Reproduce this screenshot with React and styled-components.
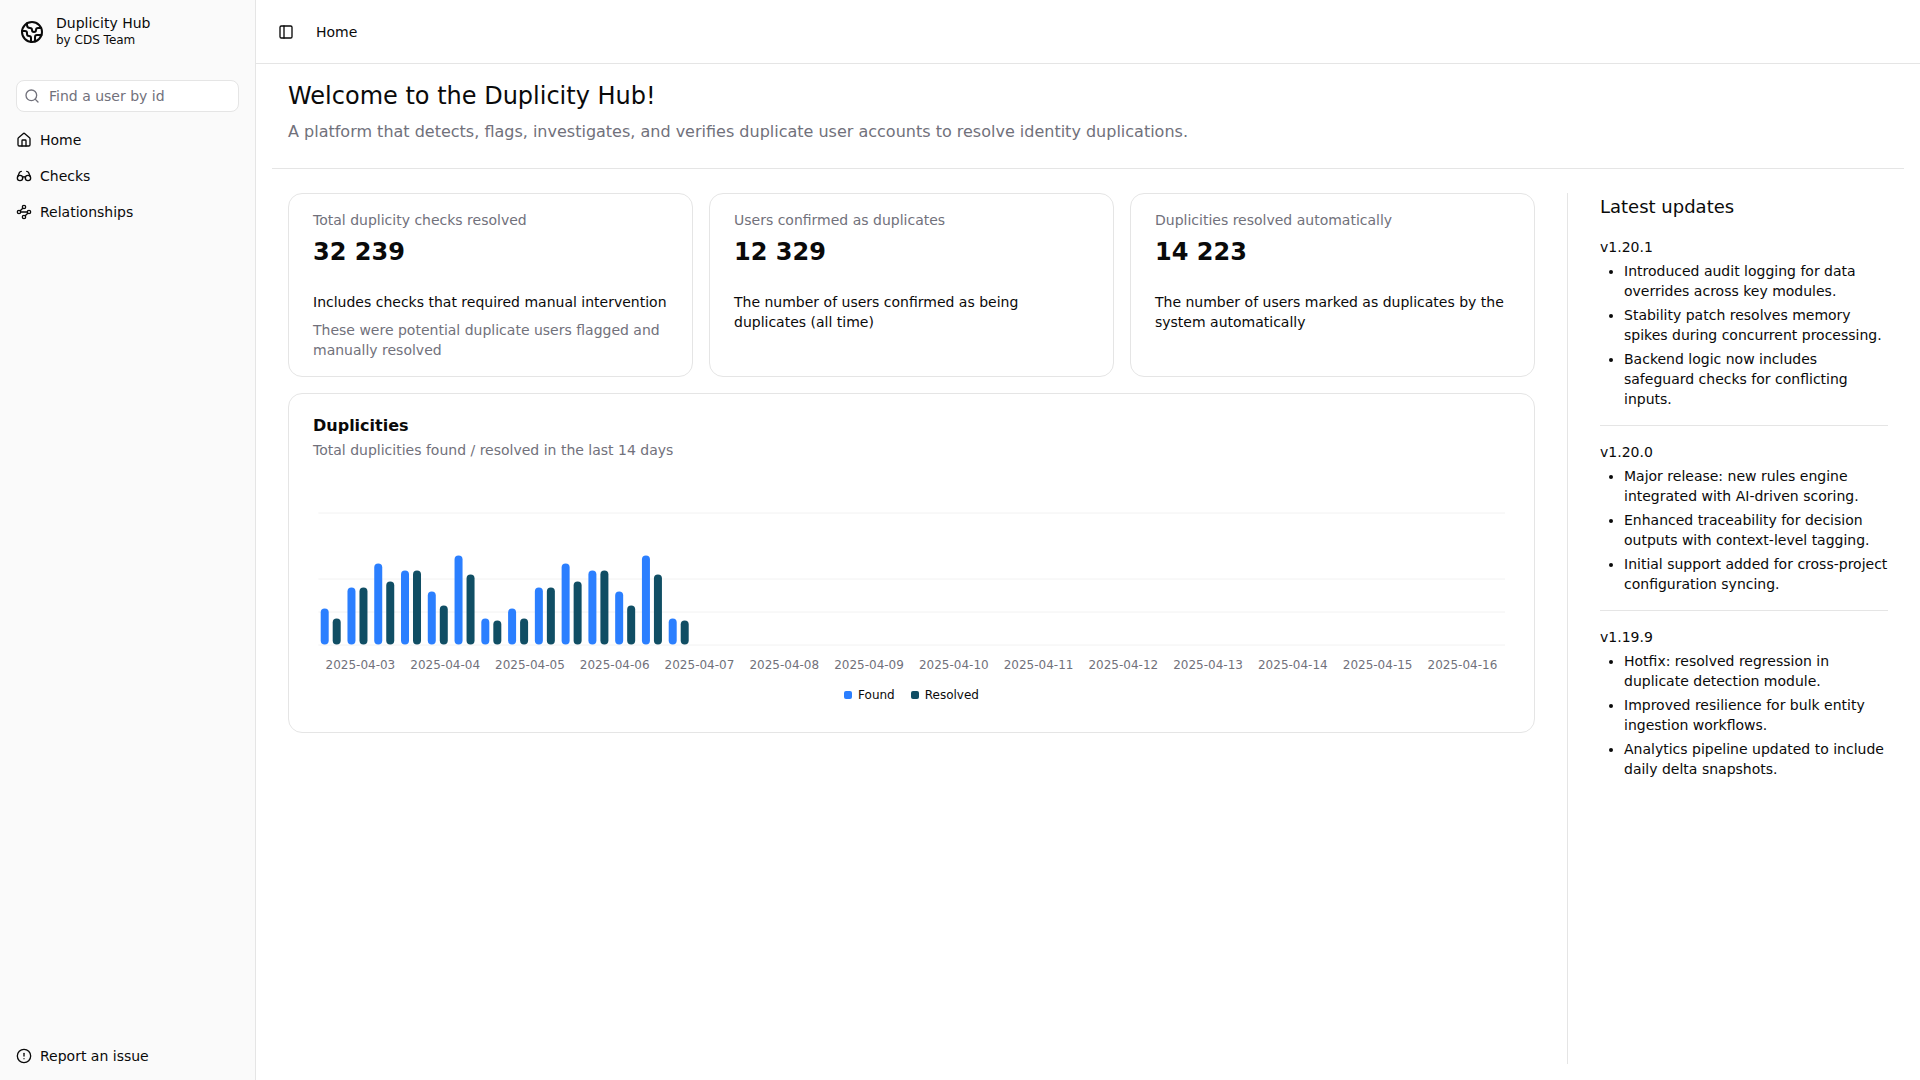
import styled, { createGlobalStyle } from "styled-components";
import {
  Earth,
  Search,
  House,
  Glasses,
  Waypoints,
  CircleAlert,
  PanelLeft,
} from "lucide-react";

const GlobalStyle = createGlobalStyle`
  * {
    box-sizing: border-box;
  }
  html, body {
    margin: 0;
    padding: 0;
    background: #fff;
    color: #0a0a0a;
    font-family: "DejaVu Sans", sans-serif;
  }
`;

const Page = styled.div`
  display: flex;
  height: 1080px;
  overflow: hidden;
`;

const Sidebar = styled.aside`
  width: 256px;
  flex-shrink: 0;
  display: flex;
  flex-direction: column;
  background: #fafafa;
  border-right: 1px solid #e5e5e5;
`;

const Brand = styled.div`
  display: flex;
  align-items: center;
  gap: 12px;
  padding: 15px 20px 0;
  height: 48px;
  svg {
    width: 24px;
    height: 24px;
    flex-shrink: 0;
  }
`;

const BrandName = styled.div`
  font-size: 14px;
  line-height: 17px;
`;

const BrandTeam = styled.div`
  font-size: 12px;
  line-height: 16px;
`;

const SearchBox = styled.label`
  display: flex;
  align-items: center;
  gap: 9px;
  height: 32px;
  margin: 32px 16px 0;
  padding: 0 8px 0 7px;
  background: #fff;
  border: 1px solid #e5e5e5;
  border-radius: 8px;
  color: #71717b;
  font-size: 14px;
  svg {
    width: 16px;
    height: 16px;
    flex-shrink: 0;
  }
`;

const Nav = styled.nav`
  display: flex;
  flex-direction: column;
  gap: 4px;
  padding: 12px 8px 0;
`;

const NavItem = styled.a`
  display: flex;
  align-items: center;
  gap: 8px;
  height: 32px;
  padding: 0 8px;
  font-size: 14px;
  color: #0a0a0a;
  svg {
    width: 16px;
    height: 16px;
    flex-shrink: 0;
  }
`;

const SidebarFoot = styled.div`
  margin-top: auto;
  padding: 0 8px 8px;
`;

const Main = styled.main`
  flex: 1;
  min-width: 0;
  display: flex;
  flex-direction: column;
`;

const TopBar = styled.header`
  display: flex;
  align-items: center;
  gap: 22px;
  height: 64px;
  padding: 0 22px;
  border-bottom: 1px solid #e5e5e5;
  font-size: 14px;
  svg {
    width: 16px;
    height: 16px;
  }
`;

const Body = styled.div`
  flex: 1;
  min-height: 0;
  display: flex;
  flex-direction: column;
  padding: 0 16px 16px;
`;

const Intro = styled.section`
  padding: 16px 16px 24px;
  border-bottom: 1px solid #e5e5e5;
`;

const Title = styled.h1`
  margin: 0 0 8px;
  font-size: 24px;
  line-height: 32px;
  font-weight: 400;
`;

const Subtitle = styled.p`
  margin: 0;
  font-size: 16px;
  line-height: 24px;
  color: #71717b;
`;

const Columns = styled.div`
  flex: 1;
  min-height: 0;
  display: flex;
  gap: 32px;
  padding: 24px 0 0 16px;
`;

const Left = styled.div`
  width: 1247px;
  flex-shrink: 0;
  display: flex;
  flex-direction: column;
  gap: 16px;
`;

const Stats = styled.div`
  display: grid;
  grid-template-columns: repeat(3, 1fr);
  gap: 16px;
`;

const Card = styled.div`
  background: #fff;
  border: 1px solid #e5e5e5;
  border-radius: 14px;
  padding: 16px 24px;
`;

const StatLabel = styled.div`
  font-size: 14px;
  line-height: 20px;
  color: #71717b;
`;

const StatValue = styled.div`
  margin-top: 6px;
  margin-bottom: 24px;
  font-size: 24px;
  line-height: 32px;
  font-weight: 700;
`;

const StatNote = styled.div`
  font-size: 14px;
  line-height: 20px;
`;

const StatMuted = styled.div`
  margin-top: 8px;
  font-size: 14px;
  line-height: 20px;
  color: #71717b;
`;

const ChartCard = styled(Card)`
  height: 340px;
  padding: 20px 24px 0;
`;

const ChartTitle = styled.h2`
  margin: 0;
  font-size: 16px;
  line-height: 24px;
  font-weight: 700;
`;

const ChartSub = styled.p`
  margin: 2px 0 0;
  font-size: 14px;
  line-height: 20px;
  color: #71717b;
`;

const ChartArea = styled.div`
  margin: 30px -24px 0;
  svg {
    display: block;
  }
`;

const Legend = styled.div`
  display: flex;
  justify-content: center;
  gap: 16px;
  margin-top: 7px;
  font-size: 12px;
  line-height: 16px;
`;

const LegendItem = styled.span`
  display: flex;
  align-items: center;
  gap: 6px;
`;

const Swatch = styled.i`
  width: 8px;
  height: 8px;
  border-radius: 2px;
  background: ${(p) => p.$color};
`;

const Updates = styled.aside`
  flex: 1;
  min-width: 0;
  border-left: 1px solid #e5e5e5;
  padding: 0 16px 0 32px;
`;

const UpdatesTitle = styled.h2`
  margin: 0 0 16px;
  font-size: 18px;
  line-height: 28px;
  font-weight: 400;
`;

const Release = styled.div`
  font-size: 14px;
  line-height: 20px;
  & + & {
    margin-top: 16px;
    padding-top: 16px;
    border-top: 1px solid #e5e5e5;
  }
`;

const Changes = styled.ul`
  margin: 4px 0 0;
  padding: 0 0 0 24px;
  display: flex;
  flex-direction: column;
  gap: 4px;
`;

const stats = [
  {
    label: "Total duplicity checks resolved",
    value: "32 239",
    note: "Includes checks that required manual intervention",
    muted: "These were potential duplicate users flagged and manually resolved",
  },
  {
    label: "Users confirmed as duplicates",
    value: "12 329",
    note: "The number of users confirmed as being duplicates (all time)",
  },
  {
    label: "Duplicities resolved automatically",
    value: "14 223",
    note: "The number of users marked as duplicates by the system automatically",
  },
];

const releases = [
  {
    version: "v1.20.1",
    items: [
      "Introduced audit logging for data overrides across key modules.",
      "Stability patch resolves memory spikes during concurrent processing.",
      "Backend logic now includes safeguard checks for conflicting inputs.",
    ],
  },
  {
    version: "v1.20.0",
    items: [
      "Major release: new rules engine integrated with AI-driven scoring.",
      "Enhanced traceability for decision outputs with context-level tagging.",
      "Initial support added for cross-project configuration syncing.",
    ],
  },
  {
    version: "v1.19.9",
    items: [
      "Hotfix: resolved regression in duplicate detection module.",
      "Improved resilience for bulk entity ingestion workflows.",
      "Analytics pipeline updated to include daily delta snapshots.",
    ],
  },
];

// bar heights in px, read off the chart
const found = [36, 57, 81, 74, 53, 89, 26, 36, 57, 81, 74, 53, 89, 26];
const resolved = [26, 57, 63, 74, 39, 70, 24, 26, 57, 63, 74, 39, 70, 24];
const dates = [
  "2025-04-03",
  "2025-04-04",
  "2025-04-05",
  "2025-04-06",
  "2025-04-07",
  "2025-04-08",
  "2025-04-09",
  "2025-04-10",
  "2025-04-11",
  "2025-04-12",
  "2025-04-13",
  "2025-04-14",
  "2025-04-15",
  "2025-04-16",
];

const BLUE = "#2b7fff";
const TEAL = "#104e64";

// svg origin sits at the card's inner left edge (x=289, y=490)
function Bars() {
  const base = 154.6;
  return (
    <svg width="1245" height="190" viewBox="0 0 1245 190">
      {[23, 89, 122, 155].map((y) => (
        <line key={y} x1="29.3" x2="1216" y1={y} y2={y} stroke="#f2f2f2" strokeWidth="1" />
      ))}
      {found.map((h, i) => (
        <rect
          key={i}
          x={31.7 + i * 26.77}
          y={base - h}
          width="8"
          height={h}
          rx="4"
          fill={BLUE}
        />
      ))}
      {resolved.map((h, i) => (
        <rect
          key={i}
          x={43.7 + i * 26.77}
          y={base - h}
          width="8"
          height={h}
          rx="4"
          fill={TEAL}
        />
      ))}
      {dates.map((d, i) => (
        <text
          key={d}
          x={71.4 + i * 84.77}
          y="179"
          textAnchor="middle"
          fontSize="12"
          fill="#71717b"
          fontFamily="DejaVu Sans, sans-serif"
        >
          {d}
        </text>
      ))}
    </svg>
  );
}

export default function App() {
  return (
    <>
      <GlobalStyle />
      <Page>
        <Sidebar>
          <Brand>
            <Earth />
            <div>
              <BrandName>Duplicity Hub</BrandName>
              <BrandTeam>by CDS Team</BrandTeam>
            </div>
          </Brand>
          <SearchBox>
            <Search />
            Find a user by id
          </SearchBox>
          <Nav>
            <NavItem>
              <House />
              Home
            </NavItem>
            <NavItem>
              <Glasses />
              Checks
            </NavItem>
            <NavItem>
              <Waypoints />
              Relationships
            </NavItem>
          </Nav>
          <SidebarFoot>
            <NavItem>
              <CircleAlert />
              Report an issue
            </NavItem>
          </SidebarFoot>
        </Sidebar>
        <Main>
          <TopBar>
            <PanelLeft />
            <span>Home</span>
          </TopBar>
          <Body>
            <Intro>
              <Title>Welcome to the Duplicity Hub!</Title>
              <Subtitle>
                A platform that detects, flags, investigates, and verifies duplicate user accounts
                to resolve identity duplications.
              </Subtitle>
            </Intro>
            <Columns>
              <Left>
                <Stats>
                  {stats.map((s) => (
                    <Card key={s.label}>
                      <StatLabel>{s.label}</StatLabel>
                      <StatValue>{s.value}</StatValue>
                      <StatNote>{s.note}</StatNote>
                      {s.muted && <StatMuted>{s.muted}</StatMuted>}
                    </Card>
                  ))}
                </Stats>
                <ChartCard>
                  <ChartTitle>Duplicities</ChartTitle>
                  <ChartSub>Total duplicities found / resolved in the last 14 days</ChartSub>
                  <ChartArea>
                    <Bars />
                  </ChartArea>
                  <Legend>
                    <LegendItem>
                      <Swatch $color={BLUE} />
                      Found
                    </LegendItem>
                    <LegendItem>
                      <Swatch $color={TEAL} />
                      Resolved
                    </LegendItem>
                  </Legend>
                </ChartCard>
              </Left>
              <Updates>
                <UpdatesTitle>Latest updates</UpdatesTitle>
                {releases.map((r) => (
                  <Release key={r.version}>
                    {r.version}
                    <Changes>
                      {r.items.map((item) => (
                        <li key={item}>{item}</li>
                      ))}
                    </Changes>
                  </Release>
                ))}
              </Updates>
            </Columns>
          </Body>
        </Main>
      </Page>
    </>
  );
}
